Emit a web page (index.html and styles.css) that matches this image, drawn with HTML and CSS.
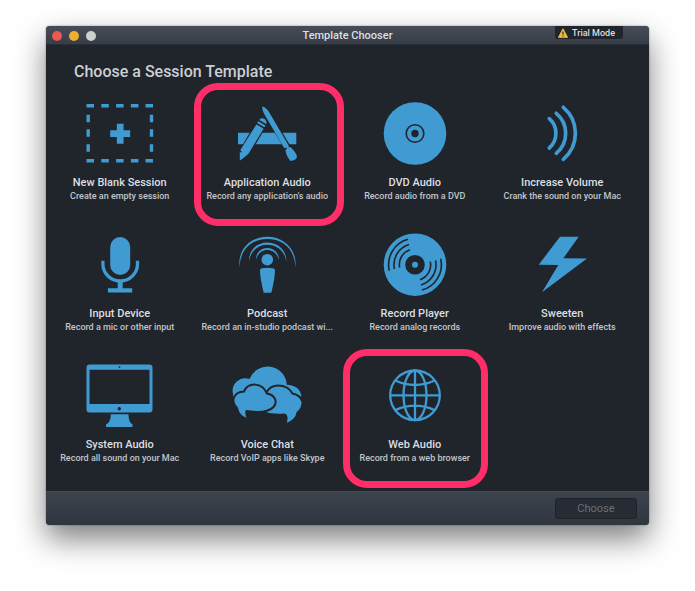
FILE: index.html
```html
<!DOCTYPE html>
<html lang="en">
<head>
<meta charset="utf-8">
<title>Template Chooser</title>
<link rel="stylesheet" href="styles.css">
</head>
<body>
<main class="window">
  <header class="titlebar">
    <div class="lights">
      <button class="light close" aria-label="Close"></button>
      <button class="light minimize" aria-label="Minimize"></button>
      <button class="light zoom" aria-label="Zoom"></button>
    </div>
    <h1 class="window-title">Template Chooser</h1>
    <div class="trial">
      <svg class="warning" viewBox="0 0 10 10" aria-hidden="true"><path d="M5 .8 9.5 9.3H.5Z" fill="#f0b93a" stroke="#f0b93a" stroke-linejoin="round"/><path d="M5 3.5v3M5 7.5v1.1" stroke="#22262d" stroke-width="1.2"/></svg>
      <span>Trial Mode</span>
    </div>
  </header>
  <section class="content">
    <h2 class="heading">Choose a Session Template</h2>
    <div class="templates">
      <button class="tile">
        <svg class="icon" viewBox="0 0 80 80" aria-hidden="true"><path d="M6.500 11.700h7.500M21.300 11.700h7.500M36.100 11.700h7.500M50.900 11.700h7.500M65.500 11.700h7.500M6.500 66.700h7.500M21.300 66.700h7.500M36.100 66.700h7.500M50.900 66.700h7.500M65.500 66.700h7.500M8.200 20.700v7.500M8.200 35.300v7.500M8.200 50.200v7.500M71.500 20.700v7.500M71.500 35.300v7.500M71.500 50.200v7.500" fill="none" stroke="currentColor" stroke-width="3.400"/><path d="M30.200 39.700h20M40.200 29.700v20" stroke="currentColor" stroke-width="6.700"/></svg>
        <span class="name">New Blank Session</span>
        <span class="desc">Create an empty session</span>
      </button>
      <button class="tile marked marked-app">
        <svg class="icon" viewBox="0 0 80 80" aria-hidden="true"><path d="M11 38.700h58.300v11.600H11Z"/><g class="cut"><path d="M29.300 29.500 37 34 21 61.500 13 66.700 13.500 56.500Z"/><path d="M35.500 12.700Q39 13 42 18L62 51.500Q68 57 70 62.500Q70 67 64 67.200Q60 62 59.500 56L37.500 20Q35 15 35.500 12.700Z"/></g><path d="M29.300 30.500 36.600 34.700 21 60.500 13.200 56.200ZM12.800 57.700 19.500 61.600 12.800 66.700ZM31.200 27.300 38.500 31.500 37.400 33.300 30.100 29.100ZM33.400 24.500Q38.500 23.400 39.700 28.700L39.100 30.100 32.300 26.100Z"/><path d="M35.300 12.500Q39 13 42 18L61.800 51.700 57.300 54.300 37.500 20.500Q34.800 15.500 35.300 12.500ZM58.400 55.800 63.300 53Q69.500 58.500 70 63 68.500 66.700 63.500 66.900 59.200 62.500 58.400 55.800Z"/></svg>
        <span class="name">Application Audio</span>
        <span class="desc">Record any application's audio</span>
      </button>
      <button class="tile">
        <svg class="icon" viewBox="0 0 80 80" aria-hidden="true"><circle cx="40" cy="39.500" r="31.300"/><circle cx="40" cy="39.500" r="8.800" fill="none" stroke="#20242b" stroke-width="1.600"/><circle cx="40" cy="39.500" r="3.700" fill="#20242b"/></svg>
        <span class="name">DVD Audio</span>
        <span class="desc">Record audio from a DVD</span>
      </button>
      <button class="tile">
        <svg class="icon" viewBox="0 0 80 80" aria-hidden="true"><path d="M27.300 24.700A19.500 19.500 0 0 1 27.300 54M34.300 19.300A26 26 0 0 1 34.300 59.300M41.300 13.300A34 34 0 0 1 41.300 65.300" fill="none" stroke="currentColor" stroke-width="3.700" stroke-linecap="round"/></svg>
        <span class="name">Increase Volume</span>
        <span class="desc">Crank the sound on your Mac</span>
      </button>
      <button class="tile">
        <svg class="icon" viewBox="0 0 80 80" aria-hidden="true"><rect x="30.200" y="12" width="20" height="38" rx="10"/><path d="M22.900 35.700V39A17.300 17 0 0 0 57.500 39V35.700" fill="none" stroke="currentColor" stroke-width="3.300"/><path d="M37.700 57h5v6.300h9.500v4.200H27.900v-4.200H37.700Z"/></svg>
        <span class="name">Input Device</span>
        <span class="desc">Record a mic or other input</span>
      </button>
      <button class="tile">
        <svg class="icon" viewBox="0 0 80 80" aria-hidden="true"><circle cx="40.300" cy="34.700" r="5.800"/><path d="M33 45Q33 42.700 40.300 42.700T48 45Q48 53 44.300 67.700H36.700Q33 53 33 45Z"/><path d="M12.500 42C10.500 24 24 11.700 40.300 11.700S70.100 24 68.500 42C67.500 24 56 14.100 40.300 14.100S13.500 24 12.500 42ZM22 37C21.500 25 30 17.500 40.300 17.500S59.800 25 59.300 37C58 26 50 19.700 40.300 19.700S23.500 26 22 37ZM29 35C28.500 28 34 23 40.300 23S52.300 28 51.700 35C50.500 29 46 25 40.300 25S30.300 29 29 35Z"/></svg>
        <span class="name">Podcast</span>
        <span class="desc">Record an in-studio podcast wi...</span>
      </button>
      <button class="tile">
        <svg class="icon" viewBox="0 0 80 80" aria-hidden="true"><circle cx="40" cy="39.700" r="31.300"/><circle cx="40" cy="39.700" r="9.800" fill="#20242b"/><circle cx="40" cy="39.700" r="3"/><g fill="none" stroke="#20242b" stroke-width="1.600"><path id="grooves" d="M14.300 45.700A26.300 26.300 0 0 1 33 14.300M19.400 44A21 21 0 0 1 34 19.500M24.700 42.700A15.600 15.600 0 0 1 35 24.700"/><use href="#grooves" transform="rotate(180 40 39.700)"/></g></svg>
        <span class="name">Record Player</span>
        <span class="desc">Record analog records</span>
      </button>
      <button class="tile">
        <svg class="icon" viewBox="0 0 80 80" aria-hidden="true"><path d="M38 11.700H56.700L41.300 33.300 65 33.500 20 67.300 36.300 40 16.700 39.700Z"/></svg>
        <span class="name">Sweeten</span>
        <span class="desc">Improve audio with effects</span>
      </button>
      <button class="tile">
        <svg class="icon" viewBox="0 0 80 80" aria-hidden="true"><path fill-rule="evenodd" d="M9.500 8.500h60a3 3 0 0 1 3 3v42a3 3 0 0 1-3 3h-60a3 3 0 0 1-3-3v-42a3 3 0 0 1 3-3ZM9.500 13.700v34.300h60V13.700Z"/><circle cx="39.500" cy="11.100" r=".9" fill="#20242b"/><circle cx="39.300" cy="52.700" r="1.700" fill="#20242b"/><path d="M30.800 58.300h17.700Q48.500 66.500 52.500 68.500V71H26V68.500Q30.800 66.500 30.800 58.300Z"/></svg>
        <span class="name">System Audio</span>
        <span class="desc">Record all sound on your Mac</span>
      </button>
      <button class="tile">
        <svg class="icon" viewBox="0 0 80 80" aria-hidden="true"><path d="M6 38A12.700 12.700 0 0 1 22.500 23A19.300 19.300 0 0 1 59.800 28.700Q73 29.500 74.300 40L66 46H14L6.500 41Z"/><path class="cut" d="M36 56.500Q46 59.500 57.500 58.500Q61.500 60 58 68.500Q69.500 64.500 70.500 56.500Q75.500 53 75.500 46Q73.500 39 65.500 37.500C62.500 32 56.500 29.500 51 29.500C46 29.500 42 32 39.500 36Z"/><path class="cut" d="M10 52C3.500 46 6 36 17 35.500C21 26 35 26 40 37.500C48 39 51 46 46.500 51Q42 56 30 56L19.500 55Q18.500 58 21.500 63.500Q11.500 61 10 52Z"/></svg>
        <span class="name">Voice Chat</span>
        <span class="desc">Record VoIP apps like Skype</span>
      </button>
      <button class="tile marked marked-web">
        <svg class="icon" viewBox="0 0 80 80" aria-hidden="true"><g fill="none" stroke="currentColor" stroke-width="2.300"><circle cx="40" cy="39.300" r="24.800"/><ellipse cx="40" cy="39.300" rx="11.500" ry="24.800"/><path d="M40 14.300v50M15 39.300h50M20.300 24.500Q40 33.500 59.700 24.500M20.300 54.100Q40 45.100 59.700 54.100"/></g></svg>
        <span class="name">Web Audio</span>
        <span class="desc">Record from a web browser</span>
      </button>
    </div>
  </section>
  <footer class="footer">
    <button class="choose" disabled>Choose</button>
  </footer>
</main>
</body>
</html>
```
FILE: styles.css
```css
* {
  box-sizing: border-box;
}

body {
  margin: 0;
  padding: 26px 46px 66px;
  background: #fff;
  color: #dcdfe1;
  font-family: Roboto, "Liberation Sans", sans-serif;
}

button {
  margin: 0;
  padding: 0;
  border: 0;
  background: none;
  color: inherit;
  font: inherit;
}

.window {
  border-radius: 4px;
  background: #20242b;
  box-shadow: 0 14px 30px rgba(0, 0, 0, 0.5), 0 0 2px rgba(0, 0, 0, 0.4);
}

.titlebar {
  display: grid;
  grid-template-columns: 1fr auto 1fr;
  height: 19px;
  padding: 0 6px;
  border-bottom: 1px solid #2a2f37;
  border-radius: 4px 4px 0 0;
  background: linear-gradient(#464d57, #363d46);
}

.lights {
  display: flex;
  align-items: center;
  gap: 7px;
}

.light {
  width: 10px;
  height: 10px;
  border-radius: 50%;
}

.close {
  background: #ec5750;
}

.minimize {
  background: #eab031;
}

.zoom {
  background: #ccd1d0;
}

.window-title {
  margin: 0;
  font-size: 11px;
  font-weight: 500;
  line-height: 19px;
}

.trial {
  display: flex;
  align-items: center;
  justify-self: end;
  gap: 4px;
  height: 13px;
  margin-right: 20px;
  padding: 0 8px 0 3px;
  border-radius: 0 0 3px 3px;
  background: #20242b;
  font-size: 9px;
  font-weight: 500;
}

.warning {
  width: 10px;
  height: 10px;
}

.heading {
  margin: 0;
  padding: 16px 28px 8px;
  color: #cbd0d3;
  font-size: 16px;
  font-weight: 500;
  line-height: 22px;
}

.templates {
  display: grid;
  grid-template-columns: repeat(4, 1fr);
  padding: 0 13px 7px 0;
}

.tile {
  position: relative;
  display: flex;
  flex-direction: column;
  align-items: center;
  min-width: 0;
  height: 131px;
  padding-top: 3px;
}

.icon {
  width: 80px;
  height: 80px;
  color: #3f9bd2;
  fill: currentColor;
}

.cut {
  stroke: #20242b;
  stroke-width: 2;
  stroke-linejoin: round;
}

.name {
  margin-top: 1px;
  font-size: 11px;
  font-weight: 500;
  line-height: 15px;
}

.desc {
  color: #c2c6c9;
  font-size: 9px;
  font-weight: 500;
  line-height: 12px;
  white-space: nowrap;
}

.marked::after {
  content: "";
  position: absolute;
  z-index: 1;
  border: 7px solid #ff2d68;
  border-radius: 24px;
  pointer-events: none;
}

.marked-app::after {
  inset: -8px -3px -4px 0;
}

.marked-web::after {
  inset: -4px 1px -4px 2px;
}

.footer {
  display: flex;
  align-items: center;
  justify-content: flex-end;
  height: 34px;
  padding: 0 12px;
  border-top: 1px solid #444b55;
  border-radius: 0 0 4px 4px;
  background: linear-gradient(#3c434d, #30363f);
}

.choose {
  width: 82px;
  height: 21px;
  border: 1px solid #1e2229;
  border-radius: 3px;
  background: #262b34;
  color: #6a7078;
  font-size: 11px;
}
```
